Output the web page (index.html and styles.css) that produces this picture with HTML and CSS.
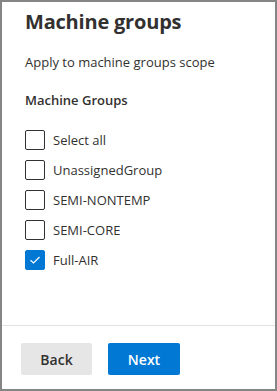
FILE: index.html
```html
<!DOCTYPE html>
<html lang="en">
<head>
  <meta charset="UTF-8">
  <title>Machine groups</title>
  <link rel="stylesheet" href="styles.css">
</head>
<body>

  <div class="panel">
    <div class="contenido">
      <h1 class="titulo">Machine groups</h1>
      <p class="descripcion">Apply to machine groups scope</p>
      <div class="etiqueta">Machine Groups</div>

      <ul class="lista">
        <li class="fila">
          <span class="caja"></span>
          <span class="texto">Select all</span>
        </li>
        <li class="fila">
          <span class="caja"></span>
          <span class="texto">UnassignedGroup</span>
        </li>
        <li class="fila">
          <span class="caja"></span>
          <span class="texto">SEMI-NONTEMP</span>
        </li>
        <li class="fila">
          <span class="caja"></span>
          <span class="texto">SEMI-CORE</span>
        </li>
        <li class="fila">
          <span class="caja marcada">
            <svg width="12" height="10" viewBox="0 0 12 10">
              <polyline points="1.5,5.2 4.5,8 10.5,2" fill="none" stroke="#fff" stroke-width="1.2"/>
            </svg>
          </span>
          <span class="texto">Full-AIR</span>
        </li>
      </ul>
    </div>

    <div class="pie">
      <button class="btn btn-back">Back</button>
      <button class="btn btn-next">Next</button>
    </div>
  </div>

</body>
</html>
```

FILE: styles.css
```css
* {
  box-sizing: border-box;
}

body {
  margin: 0;
  padding: 0;
  font-family: 'Open Sans', 'Noto Sans', sans-serif;
  color: #323130;
  background: #fff;
}

.panel {
  width: 277px;
  height: 391px;
  border: 2px solid #858585;
  display: flex;
  flex-direction: column;
}

.contenido {
  flex: 1;
  padding: 6px 0 0 23px;
}

.titulo {
  margin: 0;
  font-size: 20px;
  font-weight: 700;
  line-height: 28px;
  letter-spacing: -0.2px;
}

.descripcion {
  margin: 16px 0 0;
  font-size: 13px;
  line-height: 20px;
}

.etiqueta {
  margin-top: 18px;
  font-size: 13px;
  font-weight: 600;
  line-height: 20px;
}

.lista {
  list-style: none;
  margin: 15px 0 0;
  padding: 0;
}

.fila {
  display: flex;
  align-items: center;
  gap: 8px;
  height: 30px;
  font-size: 13px;
}

.caja {
  width: 20px;
  height: 20px;
  border: 1px solid #323130;
  border-radius: 2px;
  display: flex;
  align-items: center;
  justify-content: center;
}

.caja.marcada {
  background-color: #0078d4;
  border-color: #0078d4;
}

.pie {
  border-top: 1px solid #e1e1e1;
  height: 64px;
  padding: 17px 0 0 19px;
  display: flex;
  gap: 16px;
}

.btn {
  height: 32px;
  width: 72px;
  border: none;
  border-radius: 2px;
  font-family: inherit;
  font-size: 14px;
  font-weight: 600;
  cursor: pointer;
}

.btn-back {
  width: 71px;
  background-color: #e6e6e6;
  color: #323130;
}

.btn-next {
  background-color: #0078d4;
  color: #fff;
}
```
